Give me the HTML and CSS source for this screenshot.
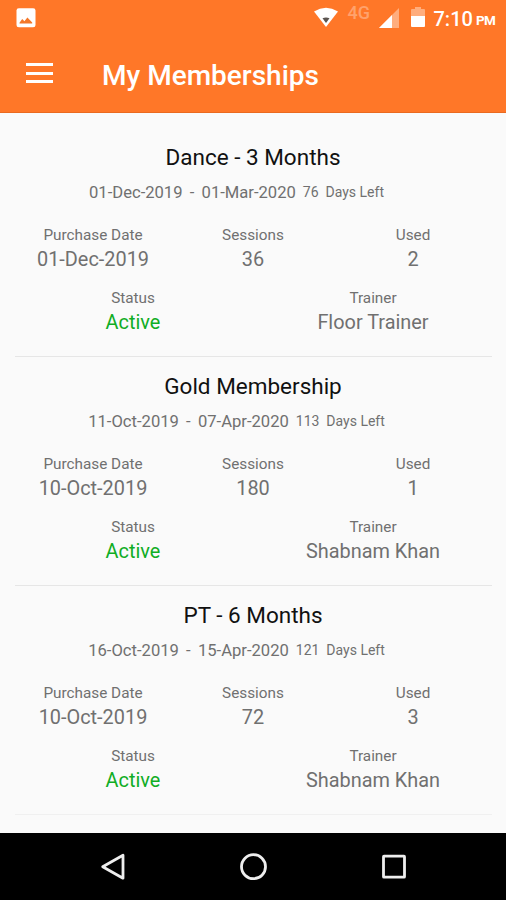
FILE: index.html
```html
<!DOCTYPE html>
<html lang="en">
<head>
    <meta charset="UTF-8">
    <meta name="viewport" content="width=device-width, initial-scale=1.0">
    <title>My Memberships</title>
    <link rel="stylesheet" href="styles.css">
</head>
<body>
    <header class="header">
      <div class="statusbar">
        <svg class="photo" width="20" height="20" viewBox="0 0 20 20">
          <rect x="0.5" y="0.3" width="19" height="19" rx="2.3" fill="#fff"/>
          <path d="M3.5 15.5v-0.8l2.7-3.7 2.2 2.3 3-3.8 4.8 5v1z" fill="#f47728"/>
        </svg>
        <svg class="wifi" width="26" height="22" viewBox="0 0 26 22">
          <path d="M1 4.5Q13-2.8 25 4.5L13 20z" fill="#fff"/>
          <path d="M9.5 11.3q3.5-1.5 7 0L13 16z" fill="#5c5550"/>
        </svg>
        <span class="network">4G</span>
        <svg class="signal" width="20" height="20" viewBox="0 0 20 20">
          <path d="M20 0v20H0z" fill="#ffad7d"/>
          <path d="M13 7v13H0z" fill="#fff"/>
        </svg>
        <svg class="battery" width="14" height="20" viewBox="0 0 14 20">
          <path d="M0 3q0-1 1-1h3V0h6v2h3q1 0 1 1v6H0z" fill="#ffad7d"/>
          <path d="M0 9h14v10q0 1-1 1H1q-1 0-1-1z" fill="#fff"/>
        </svg>
        <span class="time">7:10</span>
        <span class="ampm">PM</span>
      </div>
      <div class="toolbar">
        <div class="menu">
          <span></span>
          <span></span>
          <span></span>
        </div>
        <h1>My Memberships</h1>
      </div>
    </header>

    <main class="list">
      <div class="card">
        <h2>Dance - 3 Months</h2>
        <div class="dates">
          <span class="range">01-Dec-2019&nbsp; -&nbsp; 01-Mar-2020</span>
          <span class="left">76&nbsp; Days Left</span>
        </div>
        <div class="row">
          <div class="cell"><div class="label">Purchase Date</div><div class="value">01-Dec-2019</div></div>
          <div class="cell"><div class="label">Sessions</div><div class="value">36</div></div>
          <div class="cell"><div class="label">Used</div><div class="value">2</div></div>
        </div>
        <div class="row">
          <div class="cell"><div class="label">Status</div><div class="value active">Active</div></div>
          <div class="cell"><div class="label">Trainer</div><div class="value">Floor Trainer</div></div>
        </div>
      </div>

      <div class="card">
        <h2>Gold Membership</h2>
        <div class="dates">
          <span class="range">11-Oct-2019&nbsp; -&nbsp; 07-Apr-2020</span>
          <span class="left">113&nbsp; Days Left</span>
        </div>
        <div class="row">
          <div class="cell"><div class="label">Purchase Date</div><div class="value">10-Oct-2019</div></div>
          <div class="cell"><div class="label">Sessions</div><div class="value">180</div></div>
          <div class="cell"><div class="label">Used</div><div class="value">1</div></div>
        </div>
        <div class="row">
          <div class="cell"><div class="label">Status</div><div class="value active">Active</div></div>
          <div class="cell"><div class="label">Trainer</div><div class="value">Shabnam Khan</div></div>
        </div>
      </div>

      <div class="card last">
        <h2>PT - 6 Months</h2>
        <div class="dates">
          <span class="range">16-Oct-2019&nbsp; -&nbsp; 15-Apr-2020</span>
          <span class="left">121&nbsp; Days Left</span>
        </div>
        <div class="row">
          <div class="cell"><div class="label">Purchase Date</div><div class="value">10-Oct-2019</div></div>
          <div class="cell"><div class="label">Sessions</div><div class="value">72</div></div>
          <div class="cell"><div class="label">Used</div><div class="value">3</div></div>
        </div>
        <div class="row">
          <div class="cell"><div class="label">Status</div><div class="value active">Active</div></div>
          <div class="cell"><div class="label">Trainer</div><div class="value">Shabnam Khan</div></div>
        </div>
      </div>
    </main>

    <nav class="navbar">
      <svg width="28" height="28" viewBox="0 0 28 28">
        <path d="M24 2.2v23L3.7 13.7z"/>
      </svg>
      <svg width="28" height="28" viewBox="0 0 28 28">
        <circle cx="14.5" cy="13.7" r="12"/>
      </svg>
      <svg width="28" height="28" viewBox="0 0 28 28">
        <rect x="4.5" y="3.2" width="21" height="21" rx="0.5"/>
      </svg>
    </nav>
</body>
</html>
```

FILE: styles.css
```css
* {
  box-sizing: border-box;
}

body {
  margin: 0;
  height: 900px;
  display: flex;
  flex-direction: column;
  overflow: hidden;
  background: #fafafa;
  color: #707070;
  font-family: Roboto, "Liberation Sans", sans-serif;
}

h1, h2 {
  margin: 0;
}

.header {
  height: 113px;
  background: #ff7728;
  border-bottom: 1px solid #ea6a20;
  color: #fff;
}

.statusbar {
  height: 36px;
  padding: 0 11px 0 16px;
  display: flex;
  align-items: flex-start;
  white-space: nowrap;
}

.photo {
  margin-top: 8px;
}

.wifi {
  margin: 7px 9px 0 auto;
}

.network {
  width: 24px;
  margin: 3px 7px 0 0;
  font-size: 18px;
  line-height: 20px;
  font-weight: 500;
  color: #ffa26c;
}

.signal {
  margin: 8px 12px 0 0;
}

.battery {
  margin: 7px 9px 0 0;
}

.time {
  margin-top: 7px;
  font-size: 20px;
  line-height: 24px;
  font-weight: 500;
}

.ampm {
  margin: 11px 0 0 3px;
  font-size: 13.5px;
  line-height: 18px;
  font-weight: 700;
  letter-spacing: -0.7px;
}

.toolbar {
  height: 76px;
  padding: 3px 0 0 26px;
  display: flex;
  align-items: center;
}

.menu {
  width: 27px;
  height: 20px;
  margin: -5px 49px 0 0;
  display: flex;
  flex-direction: column;
  justify-content: space-between;
}

.menu span {
  height: 3px;
  background: #fff;
}

.toolbar h1 {
  font-size: 28px;
  line-height: 32px;
  font-weight: 500;
}

.list {
  height: 720px;
  padding: 15px 13px 0;
}

.card {
  height: 229px;
  padding-top: 15px;
  text-align: center;
  background: linear-gradient(#e6e6e6, #e6e6e6) center bottom / 477px 1.5px no-repeat;
}

.card.last {
  background-image: linear-gradient(#f0f0f0, #f0f0f0);
}

.card h2 {
  font-size: 22.5px;
  line-height: 28px;
  font-weight: 400;
  color: #111;
}

.dates {
  height: 20px;
  margin: 11px 0 24px;
  padding-right: 33px;
  display: flex;
  justify-content: center;
  align-items: center;
  gap: 7px;
  white-space: nowrap;
}

.range {
  font-size: 16.6px;
  word-spacing: -0.5px;
}

.left {
  font-size: 14px;
}

.row {
  display: flex;
  margin-bottom: 15px;
}

.cell {
  flex: 1;
}

.label {
  font-size: 15.3px;
  line-height: 18px;
}

.value {
  padding-top: 2px;
  font-size: 19.9px;
  line-height: 28px;
}

.active {
  color: #10ad25;
}

.navbar {
  height: 67px;
  display: flex;
  justify-content: center;
  align-items: center;
  gap: 112px;
  background: #000;
}

.navbar svg {
  fill: none;
  stroke: #eee;
  stroke-width: 2.8;
  stroke-linejoin: round;
}
```
